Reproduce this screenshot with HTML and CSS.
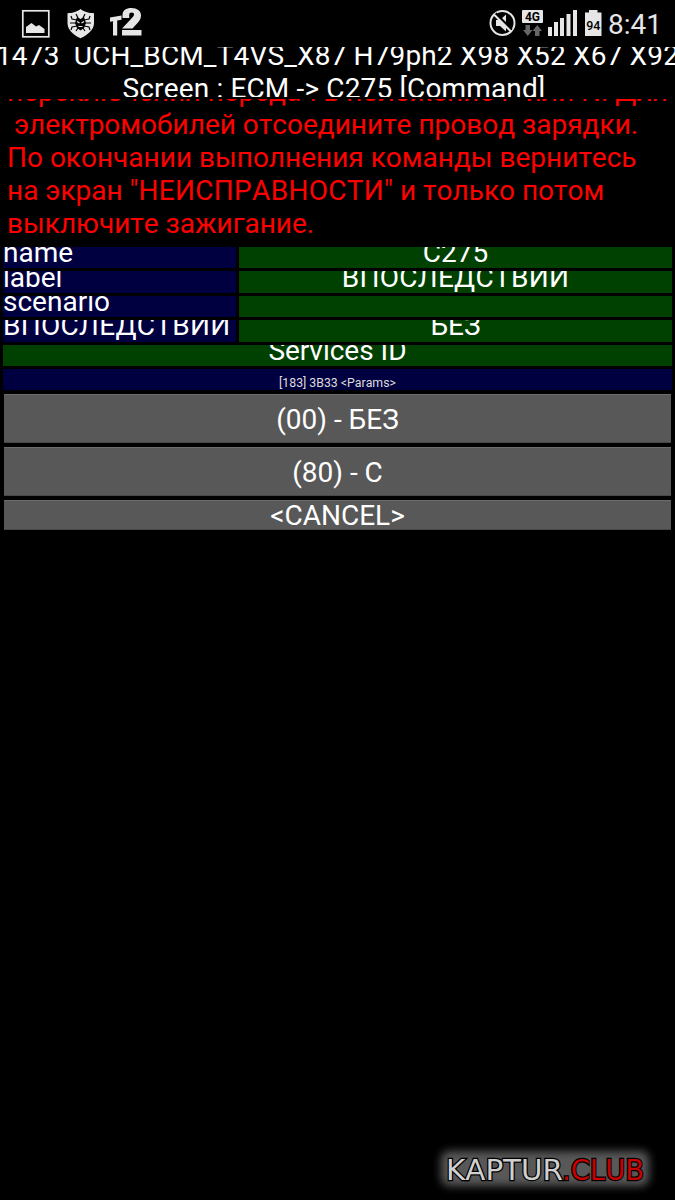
FILE: index.html
```
<!DOCTYPE html>
<html lang="ru">
<head>
    <meta charset="UTF-8">
    <meta name="viewport" content="width=device-width, initial-scale=1.0">
    <title>ECM - C275</title>
    <link rel="stylesheet" href="styles.css">
</head>
<body>

    <!-- Status bar -->
    <div class="status-bar">
        <svg class="status-left" width="150" height="47" viewBox="0 0 150 47">
            <!-- Picture -->
            <rect x="22.8" y="10.8" width="26" height="26" fill="none" stroke="#e6e6e6" stroke-width="1.7"/>
            <path d="M26 33v-6l5.500-4 4.500 3.500 3-1.500 5.500 4v4z" fill="#e6e6e6"/>
            <!-- Shield with spider -->
            <path d="M80.500 9C76 12.500 72 13 67.500 13.200V23c0 7 6 12 13 15.300C87.500 35 94 30 94 23V13.200C89 13 85 12.500 80.500 9z" fill="#e6e6e6"/>
            <path d="M77 20l-5-1-1-3M84 20l5-1 1-3M76 23h-6M85 23h6M77 26l-5 1-1 3M84 26l5 1 1 3M78 18l-2-4M83 18l2-4M78 28l-2 3M83 28l2 3" stroke="#000" stroke-width="1.200" fill="none"/>
            <path d="M77 17l3.500 2 3.500-2 2 6-2 5-3.500 2.500L77 28l-2-5z" fill="#000"/>
            <path d="M77 21.500l2.500 1.500M84 21.500l-2.500 1.500M78.500 26.500h4" stroke="#e6e6e6" stroke-width="1.200"/>
            <!-- Operator -->
            <path d="M110 17.500l11.500-2v4.300l-4.300.8V35.500H113V21.200l-3 .5z" fill="#e6e6e6"/>
            <path d="M122.500 18v-3c0-4.500 3.500-7 9-7s9.500 2.800 9.500 7.500c0 3-1.300 5-3.500 7.500l-5 5.500H122l8.500-9c2.500-2.500 3.500-3.800 3.500-5 0-1.300-.8-2-2.300-2s-2.500.8-2.500 2.500v3z" fill="#e6e6e6"/>
            <path d="M122 30h19.500v5.500H122z" fill="#e6e6e6"/>
        </svg>
        <svg class="status-right" width="190" height="47" viewBox="485 0 190 47">
            <!-- Muted -->
            <circle cx="502.500" cy="23" r="12" fill="none" stroke="#e6e6e6" stroke-width="2"/>
            <path d="M496 20h4l6-5.500v17L500 26h-4z" fill="#e6e6e6"/>
            <path d="M495.500 13.500l16 16.500" stroke="#000" stroke-width="3"/>
            <path d="M494 14.500l17 17" stroke="#e6e6e6" stroke-width="2"/>
            <!-- Network -->
            <rect x="522" y="10" width="21" height="13" rx="1" fill="#e6e6e6"/>
            <text class="net-text" x="532.500" y="20.800" text-anchor="middle">4G</text>
            <path d="M525.500 25h4.500v5h2.500l-4.700 6-4.700-6h2.400zM535 36h4.500v-5h2.500l-4.700-6-4.700 6h2.400z" fill="#666"/>
            <path d="M548 27h4v9h-4zM554 22h4v14h-4zM560 18h4v18h-4zM566.500 14h4v22h-4zM573 10h4v26h-4z" fill="#e6e6e6"/>
            <!-- Battery -->
            <path d="M585 12.500h4V10h8.500v2.500h4V36H585z" fill="#e6e6e6"/>
            <text class="battery-text" x="593.300" y="30" text-anchor="middle">94</text>
            <text class="clock" x="608" y="34.300" textLength="54">8:41</text>
        </svg>
    </div>

    <div class="header">
        <div class="header-text">1473&nbsp; UCH_BCM_T4VS_X87 H79ph2 X98 X52 X67 X92<br>Screen : ECM -&gt; C275 [Command]&nbsp;</div>
    </div>

    <!-- Warning, scrolled to the end -->
    <div class="warning">
        <div class="warning-text">переключения передач в положение P или N. Для
 электромобилей отсоедините провод зарядки.
По окончании выполнения команды вернитесь
на экран "<span class="caps">НЕИСПРАВНОСТИ</span>" и только потом
выключите зажигание.</div>
    </div>

    <div class="rows">
        <div class="row"><div class="cell name">name</div><div class="cell value">C275</div></div>
        <div class="row"><div class="cell name">label</div><div class="cell value caps">ВПОСЛЕДСТВИИ</div></div>
        <div class="row"><div class="cell name">scenario</div><div class="cell value"></div></div>
        <div class="row"><div class="cell name caps">ВПОСЛЕДСТВИИ</div><div class="cell value">БЕЗ</div></div>
        <div class="row"><div class="cell value">Services ID</div></div>
        <div class="row"><div class="cell params">[183] 3B33 &lt;Params&gt;</div></div>
    </div>

    <div class="buttons">
        <button class="btn">(00) - БЕЗ</button>
        <button class="btn">(80) - С</button>
        <button class="btn cancel">&lt;CANCEL&gt;</button>
    </div>

    <div class="watermark">
        <svg width="250" height="70" viewBox="425 1130 250 70">
            <defs>
                <filter id="glow" x="-20%" y="-80%" width="140%" height="260%">
                    <feGaussianBlur stdDeviation="4"/>
                </filter>
            </defs>
            <rect x="441" y="1151" width="208" height="35" rx="8" fill="#585858" filter="url(#glow)"/>
            <text class="logo" x="446" y="1179.500" textLength="117" lengthAdjust="spacingAndGlyphs">KAPTUR</text>
            <text class="logo logo-red" x="562" y="1179.500" textLength="82" lengthAdjust="spacingAndGlyphs">.CLUB</text>
        </svg>
    </div>

</body>
</html>
```
FILE: styles.css
```
body {
    margin: 0;
    width: 675px;
    height: 1200px;
    background: #000;
    color: #fff;
    font-family: Roboto, sans-serif;
    font-size: 28px;
    font-kerning: none;
    line-height: 33px;
    display: flex;
    flex-direction: column;
    overflow: hidden;
}
.status-bar {
    height: 47px;
    display: flex;
    justify-content: space-between;
}
.net-text {
    font-size: 12px;
    font-weight: bold;
}
.battery-text {
    font-size: 12.5px;
    font-weight: 500;
}
.clock {
    font-size: 28px;
    fill: #e6e6e6;
}
.header {
    height: 49.5px;
    overflow: hidden;
    display: flex;
    align-items: center;
    justify-content: center;
    text-align: center;
}
.header-text {
    flex: none;
    white-space: nowrap;
    letter-spacing: 0.15px;
}
/* Bottom aligned so the first line is cut off */
.warning {
    height: 142px;
    margin: 2.5px 0 6px;
    padding-left: 7px;
    overflow: hidden;
    display: flex;
    align-items: flex-end;
    color: #f00;
}
.warning-text {
    white-space: pre;
    padding-bottom: 1px;
}
.caps {
    letter-spacing: 0.3px;
}
.rows {
    display: flex;
    flex-direction: column;
    gap: 3px;
    padding: 0 3px;
}
.row {
    display: flex;
    gap: 3px;
    height: 21.4px;
}
.cell {
    flex: 1;
    overflow: hidden;
    display: flex;
    align-items: center;
    justify-content: center;
    padding-bottom: 10px;
    box-sizing: border-box;
    white-space: nowrap;
}
.name {
    flex: none;
    width: 233px;
    justify-content: flex-start;
    background: #000040;
}
.value {
    background: #004000;
}
.params {
    background: #000040;
    font-size: 12.3px;
    line-height: 14px;
    color: #ddd;
    padding: 7px 0 0;
}
.buttons {
    display: flex;
    flex-direction: column;
    gap: 4px;
    padding: 3.5px 4px 0;
}
.btn {
    height: 49px;
    padding: 2px 0 0;
    border: none;
    border-top: 1px solid #6c6c6c;
    border-bottom: 1px solid #484848;
    background: #585858;
    color: #fff;
    font: 28px/33px Roboto, sans-serif;
    font-kerning: none;
}
.cancel {
    height: 30px;
    line-height: 28px;
    padding-top: 1px;
    overflow: hidden;
}
.watermark {
    margin-top: auto;
    height: 70px;
    display: flex;
    justify-content: flex-end;
}
.logo {
    font-family: "DejaVu Sans", sans-serif;
    font-size: 29px;
    fill: #d0d0d0;
    stroke: #000;
    stroke-width: 2.5px;
    paint-order: stroke;
}
.logo-red {
    fill: #c80000;
}
```
